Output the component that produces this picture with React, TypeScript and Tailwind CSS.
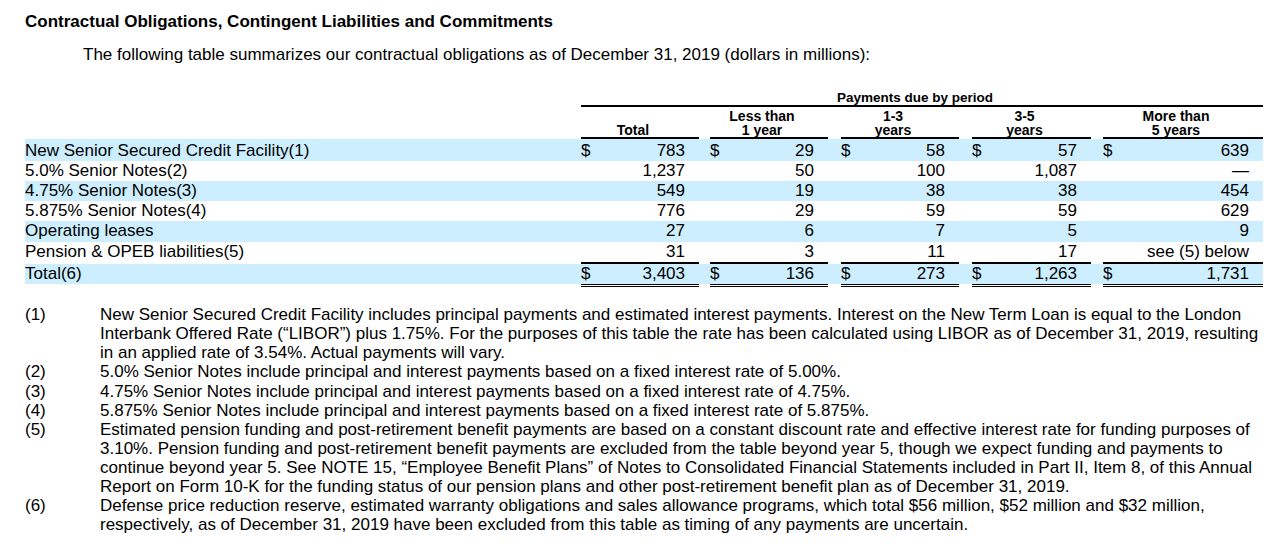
import React from "react";

const GRID =
  "grid grid-cols-[556px_118px_11px_118px_13px_118px_13px_119px_12px_160px]";

type Row = { label: string; vals: string[]; dollar?: boolean; band?: boolean };

const rows: Row[] = [
  { label: "New Senior Secured Credit Facility(1)", vals: ["783", "29", "58", "57", "639"], dollar: true, band: true },
  { label: "5.0% Senior Notes(2)", vals: ["1,237", "50", "100", "1,087", "—"] },
  { label: "4.75% Senior Notes(3)", vals: ["549", "19", "38", "38", "454"], band: true },
  { label: "5.875% Senior Notes(4)", vals: ["776", "29", "59", "59", "629"] },
  { label: "Operating leases", vals: ["27", "6", "7", "5", "9"], band: true },
  { label: "Pension & OPEB liabilities(5)", vals: ["31", "3", "11", "17", "see (5) below"] },
];

const totals = ["3,403", "136", "273", "1,263", "1,731"];

const headers: string[][] = [
  ["Total"],
  ["Less than", "1 year"],
  ["1-3", "years"],
  ["3-5", "years"],
  ["More than", "5 years"],
];

const notes: [string, string][] = [
  [
    "(1)",
    "New Senior Secured Credit Facility includes principal payments and estimated interest payments. Interest on the New Term Loan is equal to the London Interbank Offered Rate (“LIBOR”) plus 1.75%. For the purposes of this table the rate has been calculated using LIBOR as of December 31, 2019, resulting in an applied rate of 3.54%. Actual payments will vary.",
  ],
  ["(2)", "5.0% Senior Notes include principal and interest payments based on a fixed interest rate of 5.00%."],
  ["(3)", "4.75% Senior Notes include principal and interest payments based on a fixed interest rate of 4.75%."],
  ["(4)", "5.875% Senior Notes include principal and interest payments based on a fixed interest rate of 5.875%."],
  [
    "(5)",
    "Estimated pension funding and post-retirement benefit payments are based on a constant discount rate and effective interest rate for funding purposes of 3.10%. Pension funding and post-retirement benefit payments are excluded from the table beyond year 5, though we expect funding and payments to continue beyond year 5. See NOTE 15, “Employee Benefit Plans” of Notes to Consolidated Financial Statements included in Part II, Item 8, of this Annual Report on Form 10-K for the funding status of our pension plans and other post-retirement benefit plan as of December 31, 2019.",
  ],
  [
    "(6)",
    "Defense price reduction reserve, estimated warranty obligations and sales allowance programs, which total $56 million, $52 million and $32 million, respectively, as of December 31, 2019 have been excluded from this table as timing of any payments are uncertain.",
  ],
];

function Money({ v, dollar }: { v: string; dollar?: boolean }) {
  return (
    <div className="flex justify-between pr-[14px] whitespace-nowrap">
      <span>{dollar ? "$" : ""}</span>
      <span>{v}</span>
    </div>
  );
}

function DataRow({ row, first }: { row: Row; first?: boolean }) {
  const cells: React.ReactNode[] = [];
  row.vals.forEach((v, i) => {
    cells.push(<Money key={"m" + i} v={v} dollar={row.dollar} />);
    if (i < 4) cells.push(<div key={"g" + i} />);
  });
  return (
    <div
      className={`${GRID} ${row.band ? "bg-[#cceeff]" : ""} ${
        first ? "h-[21.5px] pt-[1.5px] leading-[20px]" : "h-[20.33px] leading-[20.33px]"
      }`}
    >
      <div className="whitespace-nowrap">{row.label}</div>
      {cells}
    </div>
  );
}

export default function App() {
  return (
    <div className="w-[1280px] h-[547px] overflow-hidden bg-white text-black font-['Liberation_Sans',Arial,sans-serif] text-[17px]">
      <div className="pl-[25px] pt-[13px]">
        <h1 className="text-[17px] leading-[18px] font-bold">
          Contractual Obligations, Contingent Liabilities and Commitments
        </h1>
        <p className="mt-[15px] pl-[58px] leading-[18px]">
          The following table summarizes our contractual obligations as of December 31, 2019 (dollars in millions):
        </p>

        {/* Table */}
        <div className="mt-[27px] w-[1238px]">
          <div className={GRID}>
            <div />
            <div className="col-span-9 h-[16px] pr-[14px] border-b-2 border-black text-center text-[13.5px] leading-[14px] font-bold">
              Payments due by period
            </div>
          </div>
          <div className={`${GRID} pt-[2px]`}>
            <div />
            {headers.map((h, i) => (
              <React.Fragment key={i}>
                <div className="flex flex-col justify-end items-center pr-[14px] border-b-2 border-black text-[14px] leading-[14px] font-bold">
                  {h.map((l) => (
                    <span key={l} className="whitespace-nowrap">{l}</span>
                  ))}
                </div>
                {i < 4 && <div />}
              </React.Fragment>
            ))}
          </div>

          {rows.map((r, i) => (
            <DataRow key={r.label} row={r} first={i === 0} />
          ))}

          <div className={`${GRID} leading-[20px]`}>
            <div className="bg-[#cceeff] bg-clip-padding border-t-2 border-b-[3px] border-transparent h-[25px]">
              Total(6)
            </div>
            {totals.map((v, i) => (
              <React.Fragment key={i}>
                <div className="bg-[#cceeff] bg-clip-padding border-t-2 border-b-[3px] border-t-black border-b-black border-double">
                  <Money v={v} dollar />
                </div>
                {i < 4 && (
                  <div className="bg-[#cceeff] bg-clip-padding border-t-2 border-b-[3px] border-transparent" />
                )}
              </React.Fragment>
            ))}
          </div>
        </div>

        {/* Footnotes */}
        <div className="mt-[18px] grid grid-cols-[75px_1162px] leading-[19.1px]">
          {notes.map(([n, t]) => (
            <React.Fragment key={n}>
              <div>{n}</div>
              <div>{t}</div>
            </React.Fragment>
          ))}
        </div>
      </div>
    </div>
  );
}
